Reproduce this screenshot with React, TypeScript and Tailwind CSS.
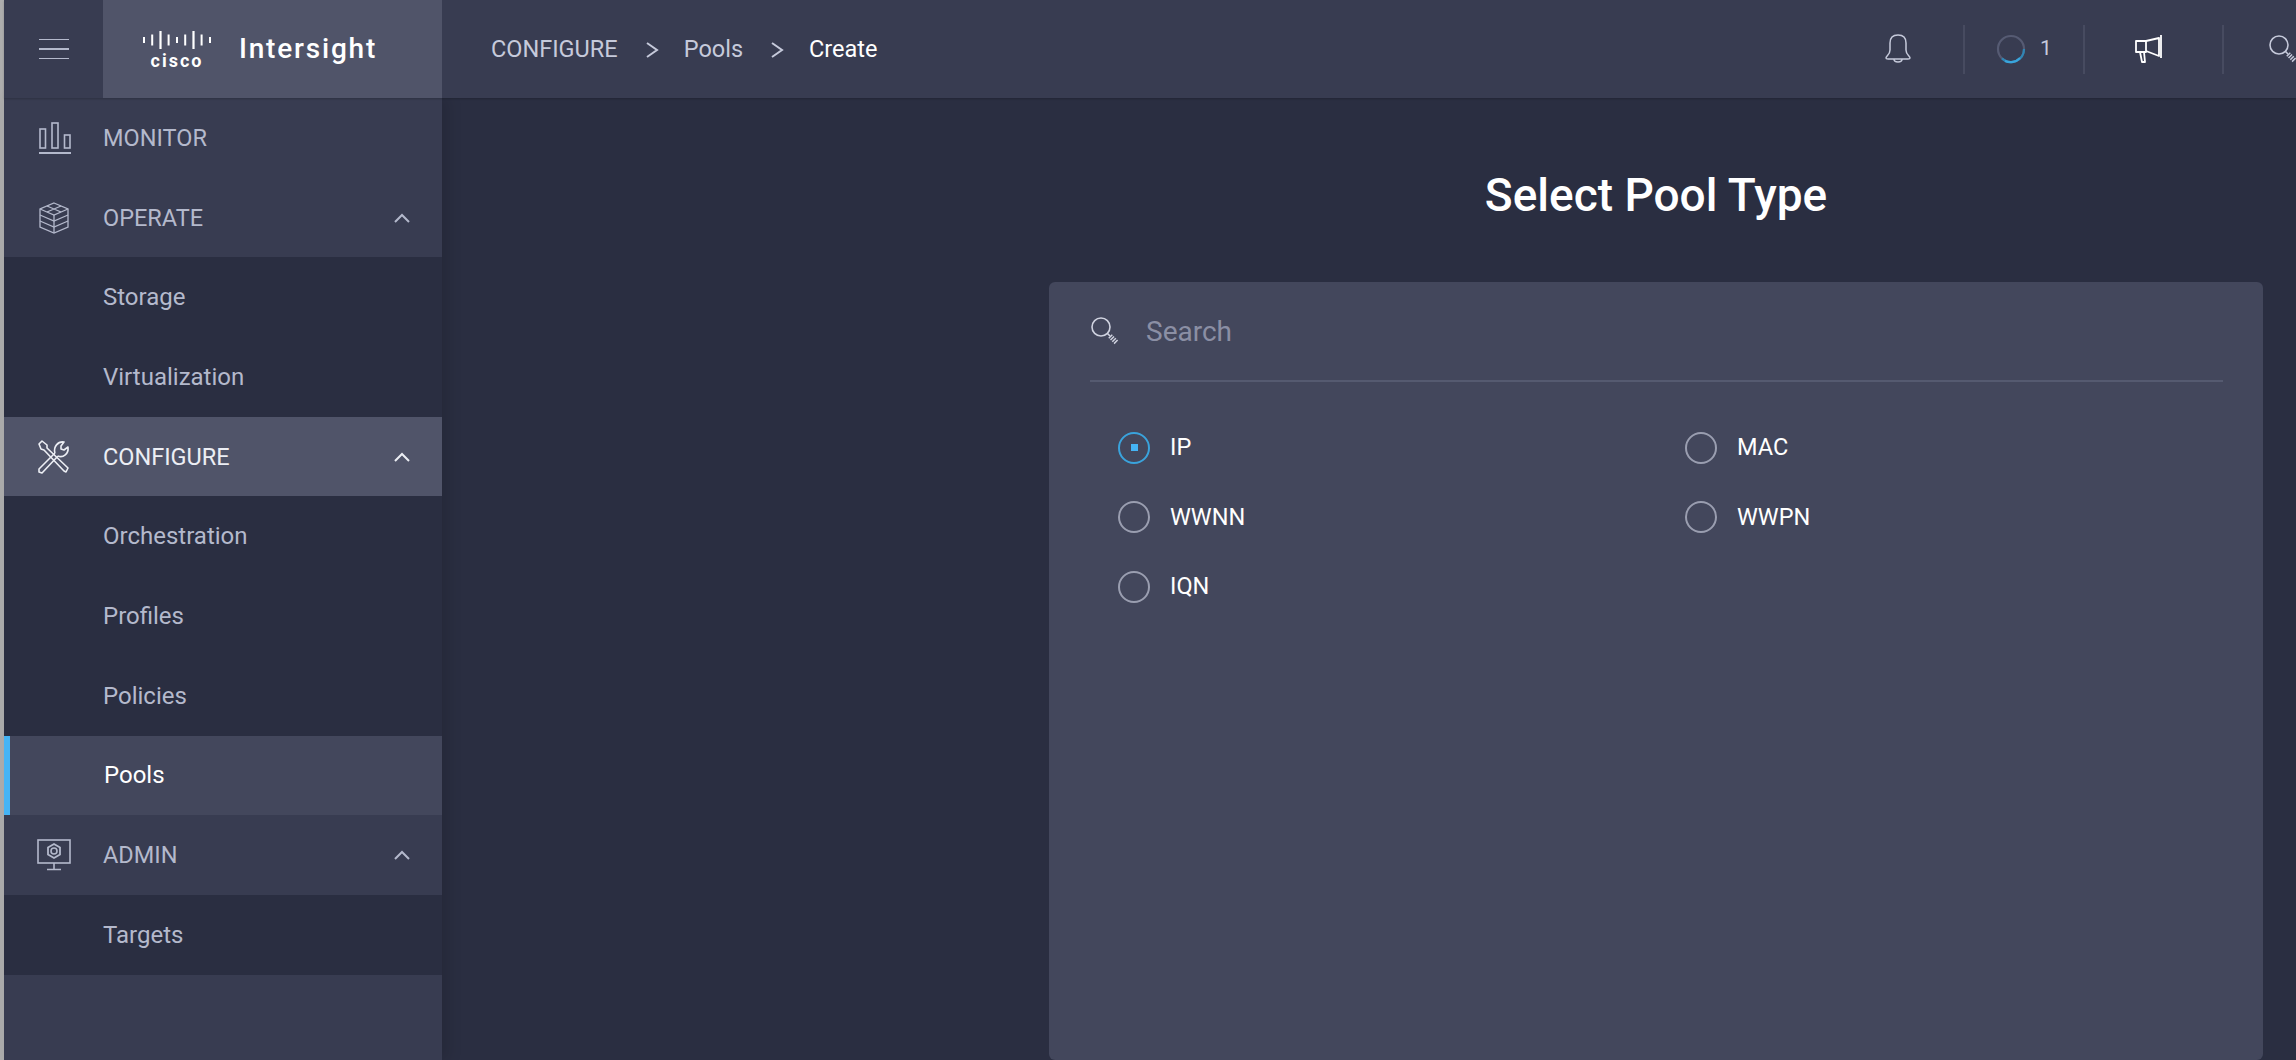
import React from 'react';

const Chevron = () => (
  <svg width="18" height="12" viewBox="0 0 18 12" fill="none" stroke="currentColor" strokeWidth="2" className="mr-[31px] ml-auto">
    <path d="M2 10 L9 3 L16 10" />
  </svg>
);

const MonitorIcon = () => (
  <svg width="34" height="34" viewBox="0 0 34 34" fill="none" stroke="currentColor" strokeWidth="1.6">
    <rect x="3" y="8" width="5.5" height="19" />
    <rect x="15" y="2" width="6" height="25" />
    <rect x="27.5" y="14" width="5.5" height="13" />
    <path d="M2 32 H34" strokeWidth="2" />
  </svg>
);

const OperateIcon = () => (
  <svg width="32" height="34" viewBox="0 0 32 34" fill="none" stroke="currentColor" strokeWidth="1.3">
    <path d="M16 2 L30 8 V26 L16 32 L2 26 V8 Z" />
    <path d="M2 8 L16 14 L30 8" />
    <path d="M2 14 L16 20 L30 14" />
    <path d="M2 20 L16 26 L30 20" />
    <path d="M16 14 V32" />
    <path d="M9 5 L23 11 M23 5 L9 11" />
  </svg>
);

const ConfigureIcon = () => (
  <svg width="34" height="34" viewBox="0 0 34 34" fill="none" stroke="currentColor" strokeWidth="1.6" strokeLinejoin="round">
    <path d="M2 4 L5 1 L10 5 L10 8 L31 28 L29 32 L27 31 L7 10 L4 9 Z" />
    <path d="M18 13 L2 29 L2 32 L5 33 L21 16" />
    <path d="M21 16 C26 18 32 14 31 7 L27 10 L24 9 L24 6 L27 2 C21 1 16 7 18 13" />
  </svg>
);

const AdminIcon = () => (
  <svg width="34" height="32" viewBox="0 0 34 32" fill="none" stroke="currentColor" strokeWidth="1.6">
    <rect x="1" y="1" width="32" height="23" />
    <path d="M17 24 V30 M10 30.5 H24" />
    <circle cx="17" cy="12" r="3" />
    <path d="M17 5 L23 8.5 V15.5 L17 19 L11 15.5 V8.5 Z" strokeWidth="1.8" />
  </svg>
);

const SearchIcon = ({ className }: { className?: string }) => (
  <svg width="30" height="30" viewBox="0 0 30 30" fill="none" stroke="currentColor" className={className}>
    <circle cx="11" cy="11" r="9" strokeWidth="1.6" />
    <path d="M17.5 17.5 L20 20" strokeWidth="1.6" />
    <path d="M20 20 L27 27" strokeWidth="5" strokeDasharray="1.5 1" />
  </svg>
);

const BellIcon = () => (
  <svg width="28" height="32" viewBox="0 0 28 32" fill="none" stroke="currentColor" strokeWidth="1.5">
    <path d="M2 25 C2 23 6 22 6 17 V10 C6 5 9 2 14 2 C19 2 22 5 22 10 V17 C22 22 26 23 26 25 C26 26 24 26 24 26 H4 C4 26 2 26 2 25 Z" />
    <path d="M10 26 C10 30 18 30 18 26" />
  </svg>
);

const MegaphoneIcon = () => (
  <svg width="32" height="30" viewBox="0 0 32 30" fill="none" stroke="currentColor" strokeWidth="1.8" strokeLinejoin="round">
    <path d="M13 7 L26 4 V22 L13 17" />
    <rect x="3" y="7" width="10" height="11" />
    <path d="M28 1 V24" />
    <path d="M7 18 L9 28 H12 L11 18" />
  </svg>
);

const Spinner = () => (
  <svg width="30" height="30" viewBox="0 0 30 30" fill="none" strokeWidth="2.2">
    <circle cx="15" cy="15" r="13" stroke="#565b73" />
    <path d="M28 15 A13 13 0 0 1 6 24.4" stroke="#2f86b5" />
    <path d="M24 24 A13 13 0 0 1 9 27" stroke="#39a5dc" />
  </svg>
);

const CiscoLogo = () => (
  <div className="flex flex-col items-center w-[68px]">
    <svg width="68" height="18" viewBox="0 0 68 18" fill="currentColor">
      <rect x="0" y="6" width="2" height="6" />
      <rect x="8.2" y="3.5" width="2" height="11" />
      <rect x="16.4" y="0" width="2.2" height="18" />
      <rect x="24.6" y="3.5" width="2" height="11" />
      <rect x="33" y="6" width="2" height="6" />
      <rect x="41.2" y="3.5" width="2" height="11" />
      <rect x="49.4" y="0" width="2.2" height="18" />
      <rect x="57.6" y="3.5" width="2" height="11" />
      <rect x="66" y="6" width="2" height="6" />
    </svg>
    <span className="text-[18px] leading-[15px] font-bold tracking-[2px] mt-[4px]">cisco</span>
  </div>
);

const groups = [
  { label: 'MONITOR', icon: <MonitorIcon />, items: [] as string[], open: false },
  { label: 'OPERATE', icon: <OperateIcon />, items: ['Storage', 'Virtualization'], open: true },
  { label: 'CONFIGURE', icon: <ConfigureIcon />, items: ['Orchestration', 'Profiles', 'Policies', 'Pools'], open: true, active: true },
  { label: 'ADMIN', icon: <AdminIcon />, items: ['Targets'], open: true },
];

const radios = ['IP', 'MAC', 'WWNN', 'WWPN', 'IQN'];

function Sidebar() {
  return (
    <aside className="w-[438px] shrink-0 bg-[#383c51] shadow-[6px_0_14px_rgba(0,0,0,0.12)] z-10">
      {groups.map((g) => (
        <div key={g.label}>
          <div className={`h-[79.7px] flex items-center ${g.active ? 'bg-[#505469] text-[#eceef4]' : 'text-[#b4b9cc]'}`}>
            <div className="w-[99px] flex justify-center">{g.icon}</div>
            <span className="text-[23.5px] pt-[2px]">{g.label}</span>
            {g.open && <Chevron />}
          </div>
          {g.items.map((item) =>
            item === 'Pools' ? (
              <div key={item} className="h-[79.7px] flex items-center bg-[#43475c] border-l-[6px] border-[#45b4f5] pl-[94px] text-[24px] text-white">
                {item}
              </div>
            ) : (
              <div key={item} className="h-[79.7px] flex items-center bg-[#2a2e41] pl-[99px] text-[24px] text-[#b4b9cc]">
                {item}
              </div>
            )
          )}
        </div>
      ))}
    </aside>
  );
}

function Header() {
  return (
    <header className="h-[98px] shrink-0 flex items-center bg-[#383c51] text-[#c6cadb] overflow-hidden shadow-[0_1px_2px_rgba(0,0,0,0.2)] z-20">
      <div className="w-[99px] h-full flex items-center justify-center">
        <div className="w-[30px] flex flex-col gap-[8px]">
          <div className="h-[1.5px] bg-[#b4b9cc]" />
          <div className="h-[1.5px] bg-[#b4b9cc]" />
          <div className="h-[1.5px] bg-[#b4b9cc]" />
        </div>
      </div>
      <div className="w-[339px] h-full flex items-center bg-[#505469] pl-[40px] text-white">
        <CiscoLogo />
        <span className="ml-[28px] text-[28px] tracking-[1.8px] font-medium">Intersight</span>
      </div>
      <nav className="flex items-center ml-[49px] pt-[2px] text-[23.5px]">
        <span>CONFIGURE</span>
        <svg width="14" height="20" viewBox="0 0 14 20" fill="none" stroke="currentColor" strokeWidth="2" className="ml-[27px] mr-[25px]">
          <path d="M2 3 L12 10 L2 17" />
        </svg>
        <span>Pools</span>
        <svg width="14" height="20" viewBox="0 0 14 20" fill="none" stroke="currentColor" strokeWidth="2" className="ml-[27px] mr-[25px]">
          <path d="M2 3 L12 10 L2 17" />
        </svg>
        <span className="text-white">Create</span>
      </nav>
      <div className="ml-auto flex items-center">
        <div className="w-[130px] flex justify-center"><BellIcon /></div>
        <div className="w-[120px] h-[49px] flex items-center justify-center gap-[14px] border-l-2 border-[#474b60]">
          <Spinner />
          <span className="text-[21px]">1</span>
        </div>
        <div className="w-[139px] h-[49px] flex items-center justify-center border-l-2 border-[#474b60] pr-[10px] text-white"><MegaphoneIcon /></div>
        <div className="w-[74px] h-[49px] flex items-center border-l-2 border-[#474b60] pl-[44px]"><SearchIcon className="shrink-0" /></div>
      </div>
    </header>
  );
}

export default function App() {
  return (
    <div className="h-screen flex overflow-hidden bg-[#2a2e41] font-['Roboto',sans-serif]">
      <div className="w-1 shrink-0 bg-[#adadad]" />
      <div className="flex-1 min-w-0 flex flex-col">
        <Header />
        <div className="flex-1 min-h-0 flex">
          <Sidebar />
          <main className="flex-1 flex flex-col items-end pr-[33px] overflow-hidden">
            <div className="w-[1214px] shrink-0">
              <h1 className="h-[184px] flex items-center justify-center pt-[10px] text-[46px] font-medium text-white">Select Pool Type</h1>
              <section className="h-[778px] bg-[#43475c] rounded-[6px] pl-[41px] pr-[40px]">
                <div className="h-[100px] flex items-center gap-[26px] border-b-2 border-[#555a70] text-[#d0d3e0]">
                  <SearchIcon />
                  <span className="text-[28px] pt-[2px] text-[#8b8fa4]">Search</span>
                </div>
                <div className="grid grid-cols-[567px_1fr] pt-[31px] pl-[28px]">
                  {radios.map((r, i) => (
                    <label key={r} className="h-[69.5px] flex items-center gap-[20px] text-[23.5px] text-white">
                      {i === 0 ? (
                        <span className="w-[32px] h-[32px] rounded-full border-2 border-[#3aa3dc] flex items-center justify-center">
                          <span className="w-[7px] h-[7px] bg-[#45b4f5]" />
                        </span>
                      ) : (
                        <span className="w-[32px] h-[32px] rounded-full border-2 border-[#9a9eb0]" />
                      )}
                      {r}
                    </label>
                  ))}
                </div>
              </section>
            </div>
          </main>
        </div>
      </div>
    </div>
  );
}
